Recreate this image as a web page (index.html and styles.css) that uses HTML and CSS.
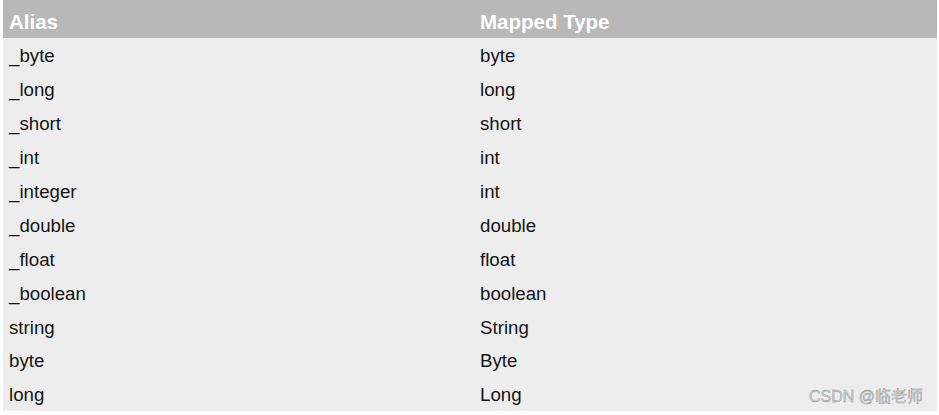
FILE: index.html
```html
<!DOCTYPE html>
<html>
<head>
<meta charset="utf-8">
<link rel="stylesheet" href="styles.css">
</head>
<body>
<div class="wrap">
<table class="types">
<thead>
<tr><th class="c1">Alias</th><th class="c2">Mapped Type</th></tr>
</thead>
<tbody>
<tr><td>_byte</td><td>byte</td></tr>
<tr><td>_long</td><td>long</td></tr>
<tr><td>_short</td><td>short</td></tr>
<tr><td>_int</td><td>int</td></tr>
<tr><td>_integer</td><td>int</td></tr>
<tr><td>_double</td><td>double</td></tr>
<tr><td>_float</td><td>float</td></tr>
<tr><td>_boolean</td><td>boolean</td></tr>
<tr><td>string</td><td>String</td></tr>
<tr><td>byte</td><td>Byte</td></tr>
<tr><td>long</td><td>Long</td></tr>
</tbody>
</table>
<div class="watermark">CSDN @临老师</div>
</div>
</body>
</html>
```
FILE: styles.css
```css
html, body {
  margin: 0;
  padding: 0;
  background: #ffffff;
}
.wrap {
  position: relative;
  width: 939px;
  height: 415px;
  padding: 0 2px 0 3px;
  box-sizing: border-box;
}
.types {
  width: 934px;
  border-collapse: collapse;
  font-family: "Liberation Sans", Arial, sans-serif;
  table-layout: fixed;
}
.types thead tr {
  background: #b8b8b8;
  height: 38px;
}
.types th {
  color: #ffffff;
  font-size: 20.5px;
  font-weight: bold;
  text-align: left;
  padding: 5px 0 0 6px;
  vertical-align: middle;
}
.types th.c1 {
  width: 465px;
}
.types tbody tr {
  background: #ededed;
  height: 33.9px;
}
.types td {
  color: #141414;
  font-size: 18.7px;
  padding: 3px 0 0 6px;
  vertical-align: middle;
}
.watermark {
  position: absolute;
  right: 16px;
  bottom: 8px;
  font-family: "Liberation Sans", "Noto Sans CJK SC", sans-serif;
  font-size: 16px;
  color: #d4d4d4;
  -webkit-text-stroke: 0.4px #8c8c8c;
}
```
